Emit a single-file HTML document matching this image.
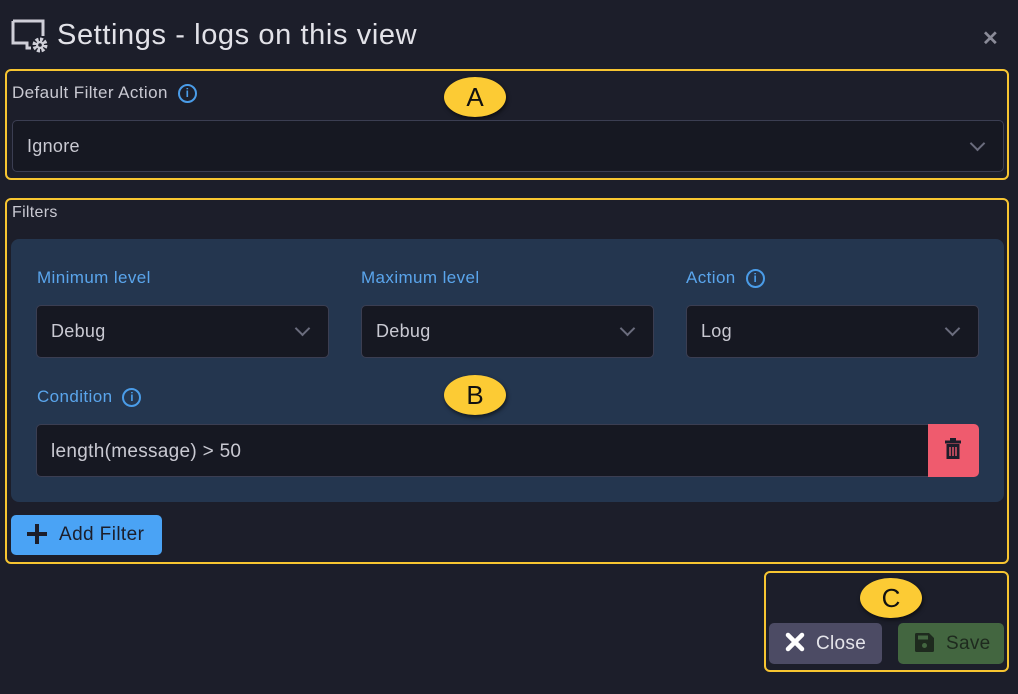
<!DOCTYPE html>
<html><head><meta charset="utf-8"><style>
*{box-sizing:border-box;margin:0;padding:0}
body{width:1018px;height:694px;background:#1c1e2a;font-family:"Liberation Sans",sans-serif;position:relative;overflow:hidden;color:#c9c9d2}
.a{position:absolute}
.box{position:absolute;border:2.5px solid #f7c531;border-radius:6px}
.badge{position:absolute;background:#fccb34;border-radius:50%;color:#111;font-size:26px;text-align:center;box-shadow:1px 2px 4px rgba(0,0,0,.6)}
.sel{position:absolute;background:#161822;border:1px solid #3b3e52;border-radius:5px;color:#c9c9d2;font-size:18px;letter-spacing:.3px}
.chev{position:absolute;width:11px;height:11px;border-right:2px solid #6a6c7d;border-bottom:2px solid #6a6c7d;transform:rotate(45deg)}
.lbl{position:absolute;color:#5aa5ec;font-size:17px;letter-spacing:.4px;display:flex;align-items:center}
.info{display:inline-block;width:19px;height:19px;border:2px solid #4a9ce8;border-radius:50%;color:#4a9ce8;font-size:12px;font-weight:bold;text-align:center;line-height:15px;margin-left:10px;letter-spacing:0}
</style></head><body>
<svg class="a" style="left:10px;top:18px" width="40" height="36" viewBox="0 0 40 36">
<path d="M3 3h30v15M3 3v22h14v5h4" fill="none" stroke="#cfcfd8" stroke-width="3"/>
<circle cx="30" cy="27" r="5" fill="none" stroke="#cfcfd8" stroke-width="5" stroke-dasharray="2.6 1.3"/>
<circle cx="30" cy="27" r="4" fill="#cfcfd8"/><circle cx="30" cy="27" r="1.8" fill="#1c1e2a"/>
</svg>
<div class="a" style="left:57px;top:19px;font-size:29px;color:#e2e2e8;letter-spacing:.6px">Settings - logs on this view</div>
<div class="a" style="left:982px;top:26px;font-size:20px;font-weight:bold;color:#8a8b98">✕</div>

<div class="box" style="left:5px;top:69px;width:1004px;height:111px"></div>
<div class="lbl" style="left:12px;top:83px;font-size:17px;color:#c9c9d2">Default Filter Action<span class="info">i</span></div>
<div class="badge" style="left:444px;top:77px;width:62px;height:40px;line-height:40px">A</div>
<div class="sel" style="left:12px;top:120px;width:992px;height:52px;padding:15px 0 0 14px">Ignore<div class="chev" style="right:20px;top:17px"></div></div>

<div class="box" style="left:5px;top:198px;width:1004px;height:366px"></div>
<div class="a" style="left:12px;top:204px;font-size:16px;letter-spacing:.3px">Filters</div>
<div class="a" style="left:11px;top:239px;width:993px;height:263px;background:#24364f;border-radius:8px"></div>
<div class="lbl" style="left:37px;top:268px">Minimum level</div>
<div class="lbl" style="left:361px;top:268px">Maximum level</div>
<div class="lbl" style="left:686px;top:268px">Action<span class="info">i</span></div>
<div class="sel" style="left:36px;top:305px;width:293px;height:53px;padding:15px 0 0 14px">Debug<div class="chev" style="right:20px;top:17px"></div></div>
<div class="sel" style="left:361px;top:305px;width:293px;height:53px;padding:15px 0 0 14px">Debug<div class="chev" style="right:20px;top:17px"></div></div>
<div class="sel" style="left:686px;top:305px;width:293px;height:53px;padding:15px 0 0 14px">Log<div class="chev" style="right:20px;top:17px"></div></div>
<div class="lbl" style="left:37px;top:387px">Condition<span class="info">i</span></div>
<div class="badge" style="left:444px;top:375px;width:62px;height:40px;line-height:40px">B</div>
<div class="sel" style="left:36px;top:424px;width:900px;height:53px;padding:16px 0 0 14px;font-size:19px;border-radius:5px 0 0 5px">length(message) &gt; 50</div>
<div class="a" style="left:928px;top:424px;width:51px;height:53px;background:#ef5b6e;border-radius:0 5px 5px 0">
<svg class="a" style="left:17px;top:14px" width="16" height="22" viewBox="0 0 16 22"><rect x="5" y="0" width="6" height="3" fill="#1c1e2a"/><rect x="0" y="2.5" width="16" height="3" fill="#1c1e2a"/><rect x="1.5" y="6" width="13" height="15" fill="#1c1e2a"/><path d="M5 9v9M8 9v9M11 9v9" stroke="#ef5b6e" stroke-width="1.4"/></svg></div>
<div class="a" style="left:11px;top:515px;width:151px;height:40px;background:#4aa3f5;border-radius:5px;color:#1c1e2a;font-size:19px;padding:9px 0 0 48px;letter-spacing:.4px">Add Filter</div>
<div class="a" style="left:27px;top:524px;width:20px;height:20px"><div class="a" style="left:8px;top:0;width:4px;height:20px;background:#1c1e2a"></div><div class="a" style="left:0;top:8px;width:20px;height:4px;background:#1c1e2a"></div></div>

<div class="box" style="left:764px;top:571px;width:245px;height:101px"></div>
<div class="badge" style="left:860px;top:578px;width:62px;height:40px;line-height:40px">C</div>
<div class="a" style="left:769px;top:623px;width:113px;height:41px;background:#4c4b64;border-radius:5px;color:#e4e4ea;font-size:19px;padding:10px 0 0 47px;letter-spacing:.3px">Close</div>
<svg class="a" style="left:785px;top:632px" width="20" height="20" viewBox="0 0 20 20"><path d="M3 3L17 17M17 3L3 17" stroke="#fff" stroke-width="4.5" stroke-linecap="round"/></svg>
<div class="a" style="left:898px;top:623px;width:106px;height:41px;background:#436640;border-radius:5px;color:#1e2a1e;font-size:19px;padding:10px 0 0 48px;letter-spacing:.3px">Save</div>
<svg class="a" style="left:915px;top:633px" width="19" height="19" viewBox="0 0 19 19"><path d="M0 1.5A1.5 1.5 0 0 1 1.5 0H14l5 5v12.5a1.5 1.5 0 0 1-1.5 1.5h-16A1.5 1.5 0 0 1 0 17.5z" fill="#1e2a1e"/><rect x="3" y="2.5" width="10" height="4" fill="#436640"/><circle cx="9.5" cy="12.5" r="2.5" fill="#436640"/></svg>
</body></html>
